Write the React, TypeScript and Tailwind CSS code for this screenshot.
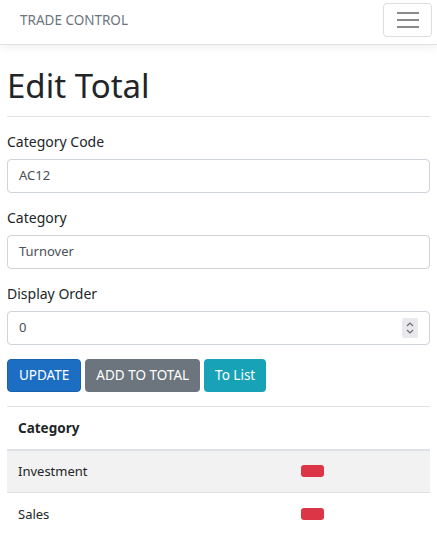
import React from 'react';

const font = { fontFamily: '"Noto Sans", "Open Sans", sans-serif' };

function Field({ label, value, spinner, last }: { label: string; value: string; spinner?: boolean; last?: boolean }) {
  return (
    <div className={last ? 'mb-[14px]' : 'mb-[15px]'}>
      <label className="block text-[14px] leading-[20px] text-[#212529] mb-[7px]">{label}</label>
      <div className="h-[34px] border border-[#ced4da] rounded-[4px] bg-white flex items-center px-[11px] text-[13px] text-[#495057]">
        <span className="flex-1">{value}</span>
        {spinner && (
          <span className="w-[16px] h-[20px] bg-[#e9e9ed] rounded-[2px] flex flex-col items-center justify-center">
            <svg width="10" height="16" viewBox="0 0 10 16" fill="none" stroke="#6b6b6b" strokeWidth="1.2">
              <path d="M2 6 L5 3 L8 6" />
              <path d="M2 10 L5 13 L8 10" />
            </svg>
          </span>
        )}
      </div>
    </div>
  );
}

export default function App() {
  return (
    <div className="bg-white min-h-[545px] text-[#212529]" style={font}>
      <nav className="h-[45px] border-b border-[#dee2e6] shadow-[0_4px_8px_rgba(0,0,0,0.05)] flex items-center justify-between pl-[20px] pr-[5px]">
        <span className="text-[13.5px] text-[#6c757d] mt-[-4px]">TRADE CONTROL</span>
        <button className="w-[49px] h-[34px] border border-[#dddddd] rounded-[4px] flex flex-col items-center justify-center gap-[5px] mt-[-4px]">
          <span className="block w-[22px] h-[2px] bg-[#8a8a8a]" />
          <span className="block w-[22px] h-[2px] bg-[#8a8a8a]" />
          <span className="block w-[22px] h-[2px] bg-[#8a8a8a]" />
        </button>
      </nav>

      <main className="px-[7px]">
        <h1 className="text-[33px] leading-[40px] mt-[21px] mb-[10px] text-[#212529]">Edit Total</h1>
        <hr className="border-t border-[#e3e3e3] mb-[15px]" />

        <Field label="Category Code" value="AC12" />
        <Field label="Category" value="Turnover" />
        <Field label="Display Order" value="0" spinner last />

        <div className="flex gap-[4px]">
          <button className="h-[33px] px-[11px] bg-[#1b6ec2] border border-[#1861ac] rounded-[4px] text-white text-[13.5px]">UPDATE</button>
          <button className="h-[33px] px-[11px] bg-[#6c757d] rounded-[4px] text-white text-[13.5px]">ADD TO TOTAL</button>
          <button className="h-[33px] px-[11px] bg-[#17a2b8] rounded-[4px] text-white text-[13.5px]">To List</button>
        </div>

        <hr className="border-t border-[#e3e3e3] mt-[14px]" />

        <table className="w-full border-collapse">
          <thead>
            <tr className="border-b-2 border-[#dee2e6]">
              <th className="text-left font-bold text-[13.5px] px-[11px] h-[43px]">Category</th>
              <th className="w-[141px]" />
            </tr>
          </thead>
          <tbody className="text-[13px]">
            <tr className="bg-[#f2f2f2] border-b border-[#dee2e6]">
              <td className="px-[11px] h-[42px]">Investment</td>
              <td className="px-[12px]">
                <span className="block w-[23px] h-[12px] rounded-[3px] bg-[#dc3545]" />
              </td>
            </tr>
            <tr>
              <td className="px-[11px] h-[44px]">Sales</td>
              <td className="px-[12px]">
                <span className="block w-[23px] h-[12px] rounded-[3px] bg-[#dc3545]" />
              </td>
            </tr>
          </tbody>
        </table>
      </main>
    </div>
  );
}
